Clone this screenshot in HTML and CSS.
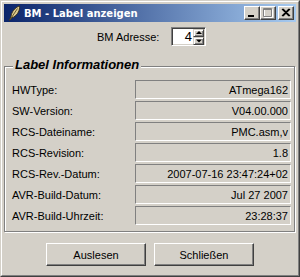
FILE: index.html
```html
<!DOCTYPE html>
<html lang="de">
<head>
<meta charset="utf-8">
<title>BM - Label anzeigen</title>
<link rel="stylesheet" href="styles.css">
</head>
<body>
<div class="window">
  <div class="frame">
    <div class="titlebar">
      <svg class="appicon" width="16" height="16" viewBox="0 0 16 16">
        <path d="M3.5 15.5 L5 11.5 C5.5 7 8.5 3 13.5 0.8 C14 5 12 9.5 7.5 12.2 L5.6 12.6 Z" fill="#d9c98f" stroke="#3a3320" stroke-width="1"/>
        <path d="M4.2 14.5 L11.5 3.5" stroke="#6b5a2a" stroke-width="1" fill="none"/>
      </svg>
      <span class="title">BM - Label anzeigen</span>
      <div class="caption-buttons">
        <div class="cbtn">
          <svg width="14" height="12" viewBox="0 0 14 12"><rect x="3" y="8" width="6" height="2" fill="#000"/></svg>
        </div>
        <div class="cbtn">
          <svg width="14" height="12" viewBox="0 0 14 12">
            <path d="M3.5 2.5 H11.5 V10.5 H3.5 Z" fill="none" stroke="#fff"/>
            <path d="M2.5 1.5 H10.5 V9.5 H2.5 Z M2 2.5 H11" fill="none" stroke="#808080"/>
          </svg>
        </div>
        <div class="cbtn cbtn-close">
          <svg width="14" height="12" viewBox="0 0 14 12"><path d="M3 2 L10 9 M4 2 L11 9 M10 2 L3 9 M11 2 L4 9" stroke="#000" stroke-width="1.1" fill="none"/></svg>
        </div>
      </div>
    </div>
    <div class="client">
      <div class="addr-row">
        <span class="addr-label">BM Adresse:</span>
        <div class="spinner">
          <span class="spin-val">4</span>
          <div class="spin-btns">
            <div class="spin-btn"><svg width="8" height="6" viewBox="0 0 8 6"><path d="M4 1 L7 4 H1 Z" fill="#000"/></svg></div>
            <div class="spin-btn"><svg width="8" height="6" viewBox="0 0 8 6"><path d="M1 1.5 H7 L4 4.5 Z" fill="#000"/></svg></div>
          </div>
        </div>
      </div>
      <div class="group">
        <span class="legend">Label Informationen</span>
        <div class="info-grid">
          <span class="lbl">HWType:</span><span class="val">ATmega162</span>
          <span class="lbl">SW-Version:</span><span class="val">V04.00.000</span>
          <span class="lbl">RCS-Dateiname:</span><span class="val">PMC.asm,v</span>
          <span class="lbl">RCS-Revision:</span><span class="val">1.8</span>
          <span class="lbl">RCS-Rev.-Datum:</span><span class="val">2007-07-16 23:47:24+02</span>
          <span class="lbl">AVR-Build-Datum:</span><span class="val">Jul 27 2007</span>
          <span class="lbl">AVR-Build-Uhrzeit:</span><span class="val">23:28:37</span>
        </div>
      </div>
      <div class="actions">
        <div class="btn">Auslesen</div>
        <div class="btn">Schließen</div>
      </div>
    </div>
  </div>
</div>
</body>
</html>
```
FILE: styles.css
```css
* { box-sizing: border-box; }
html, body { margin: 0; padding: 0; background: #d4d0c8; }
body { font-family: "Liberation Sans", Arial, sans-serif; font-size: 11px; color: #000; }

.window {
  width: 300px;
  height: 277px;
  border: 1px solid;
  border-color: #d4d0c8 #404040 #404040 #d4d0c8;
  background: #d4d0c8;
}
.frame {
  height: 100%;
  border: 1px solid;
  border-color: #fff #808080 #808080 #fff;
  padding: 2px;
  display: flex;
  flex-direction: column;
}

.titlebar {
  height: 18px;
  display: flex;
  align-items: center;
  padding: 0 2px 0 2px;
  background: linear-gradient(to right, #0a246a, #a6caf0);
  color: #fff;
}
.appicon { flex: none; display: block; }
.title {
  margin-left: 2px;
  font-family: "DejaVu Sans", Tahoma, sans-serif;
  font-weight: bold;
  font-size: 10px;
  white-space: nowrap;
  flex: 1;
}
.caption-buttons { display: flex; gap: 0; }
.cbtn {
  width: 16px;
  height: 14px;
  border: 1px solid;
  border-color: #fff #404040 #404040 #fff;
  box-shadow: inset -1px -1px 0 #808080;
  background: #d4d0c8;
}
.cbtn svg { display: block; }
.cbtn-close { margin-left: 2px; }

.client {
  flex: 1;
  display: flex;
  flex-direction: column;
}

.addr-row {
  display: flex;
  align-items: center;
  margin-top: 5px;
  padding-left: 93px;
  height: 19px;
}
.addr-label { width: 74px; }
.spinner {
  width: 35px;
  height: 19px;
  display: flex;
  align-items: stretch;
  border: 1px solid;
  border-color: #808080 #fff #fff #808080;
  box-shadow: inset 1px 1px 0 #404040, inset -1px -1px 0 #d4d0c8;
  background: #fff;
  padding: 1px 1px 1px 2px;
}
.spin-val {
  flex: 1;
  text-align: right;
  font-size: 13px;
  line-height: 15px;
  padding-right: 1px;
}
.spin-btns { display: flex; flex-direction: column; width: 11px; }
.spin-btn {
  flex: 1;
  border: 1px solid;
  border-color: #d4d0c8 #404040 #404040 #d4d0c8;
  box-shadow: inset 1px 1px 0 #fff, inset -1px -1px 0 #808080;
  background: #d4d0c8;
  display: flex;
  align-items: center;
  justify-content: center;
}
.spin-btn svg { display: block; }

.group {
  position: relative;
  margin: 20px 1px 0 0;
  border: 1px solid #808080;
  box-shadow: inset 1px 1px 0 #fff, 1px 1px 0 #fff;
  padding: 13px 3px 6px 7px;
}
.legend {
  position: absolute;
  top: -10px;
  left: 8px;
  padding: 0 2px;
  background: #d4d0c8;
  font-size: 13px;
  line-height: 15px;
  font-weight: bold;
  font-style: italic;
  white-space: nowrap;
}
.info-grid {
  display: grid;
  grid-template-columns: 123px 156px;
  grid-auto-rows: 19px;
  row-gap: 2px;
}
.lbl { display: flex; align-items: center; white-space: nowrap; }
.val {
  display: flex;
  align-items: center;
  justify-content: flex-end;
  border: 1px solid;
  border-color: #808080 #fff #fff #808080;
  padding-right: 2px;
  white-space: nowrap;
}

.actions {
  display: flex;
  justify-content: center;
  gap: 8px;
  margin-top: 11px;
}
.btn {
  width: 100px;
  height: 23px;
  border: 1px solid;
  border-color: #fff #404040 #404040 #fff;
  box-shadow: inset -1px -1px 0 #808080;
  display: flex;
  align-items: center;
  justify-content: center;
}
```
